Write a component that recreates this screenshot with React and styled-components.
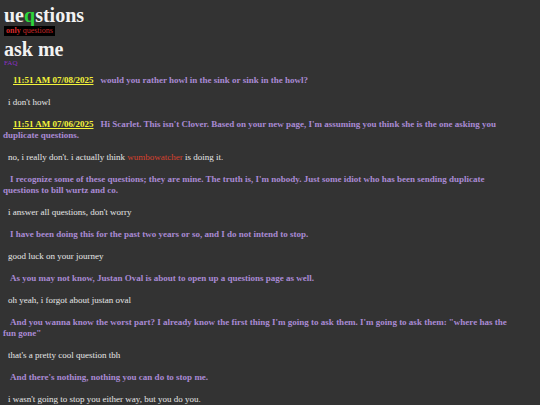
import React from 'react'
import styled, { createGlobalStyle } from 'styled-components'

const GlobalStyle = createGlobalStyle`
  body {
    margin: 0;
    background: #333333;
    font-family: 'Liberation Serif', 'Times New Roman', serif;
    color: #e6e6e6;
  }
`

const posts = [
  { stamp: '11:51 AM 07/08/2025', q: 'would you rather howl in the sink or sink in the howl?', a: ["i don't howl"] },
  {
    stamp: '11:51 AM 07/06/2025',
    q: "Hi Scarlet. This isn't Clover. Based on your new page, I'm assuming you think she is the one asking you duplicate questions.",
    a: ["no, i really don't. i actually think ", { red: 'wumbowatcher' }, ' is doing it.'],
  },
  {
    q: "I recognize some of these questions; they are mine. The truth is, I'm nobody. Just some idiot who has been sending duplicate questions to bill wurtz and co.",
    a: ["i answer all questions, don't worry"],
  },
  { q: 'I have been doing this for the past two years or so, and I do not intend to stop.', a: ['good luck on your journey'] },
  { q: 'As you may not know, Justan Oval is about to open up a questions page as well.', a: ['oh yeah, i forgot about justan oval'] },
  {
    q: 'And you wanna know the worst part? I already know the first thing I\'m going to ask them. I\'m going to ask them: "where has the fun gone"',
    a: ["that's a pretty cool question tbh"],
  },
  { q: "And there's nothing, nothing you can do to stop me.", a: ["i wasn't going to stop you either way, but you do you."] },
]

const App = () => {
  return (
    <>
      <GlobalStyle />
      <Page>
        <Header>
          <Title>
            ue<Green>q</Green>stions
          </Title>
          <Tagline>
            <b>only</b> questions
          </Tagline>
          <Title>ask me</Title>
          <Faq href='#'>FAQ</Faq>
        </Header>
        <Feed>
          {posts.map((p, i) => (
            <React.Fragment key={i}>
              <Question $stamped={!!p.stamp}>
                {p.stamp && <Stamp>{p.stamp}</Stamp>}
                {p.q}
              </Question>
              <Answer>
                {p.a.map((part, j) =>
                  typeof part === 'string' ? part : <Red key={j}>{part.red}</Red>
                )}
              </Answer>
            </React.Fragment>
          ))}
        </Feed>
      </Page>
    </>
  )
}

const Page = styled.div`
  padding: 5px 30px 0 3px;
`

const Header = styled.div`
  display: flex;
  flex-direction: column;
  align-items: flex-start;
  padding-left: 1px;
`

const Title = styled.h1`
  margin: 0;
  font-size: 20px;
  line-height: 20px;
  font-weight: bold;
  color: #f2f2f2;
`

const Green = styled.span`
  color: #2bd43a;
`

const Tagline = styled.div`
  background: #000;
  color: #c82828;
  font-size: 8px;
  line-height: 10px;
  padding: 0 2px;
  margin: 1px 0 3px;
  b {
    color: #d82a2a;
  }
`

const Faq = styled.a`
  color: #8a2fc4;
  font-size: 7px;
  text-decoration: none;
`

const Feed = styled.div`
  margin-top: 8px;
  font-size: 9px;
  line-height: 11px;
`

const Question = styled.p`
  margin: 0 0 11px;
  color: #a98ad4;
  font-weight: bold;
  text-indent: ${(p) => (p.$stamped ? '10px' : '7px')};
`

const Stamp = styled.span`
  color: #f3f33a;
  text-decoration: underline;
  margin-right: 7px;
`

const Answer = styled.p`
  margin: 0 0 11px;
  text-indent: 5px;
  color: #e6e6e6;
`

const Red = styled.span`
  color: #d8412e;
`

export default App
